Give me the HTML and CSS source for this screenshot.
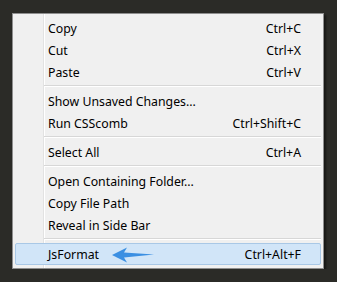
FILE: index.html
```html
<!DOCTYPE html>
<html lang="en">
<head>
  <meta charset="UTF-8" />
  <title>Context Menu</title>
  <link rel="stylesheet" href="styles.css">
</head>
<body>
  <div class="menu">
    <div class="item"><span class="label">Copy</span><span class="key">Ctrl+C</span></div>
    <div class="item"><span class="label">Cut</span><span class="key">Ctrl+X</span></div>
    <div class="item"><span class="label">Paste</span><span class="key">Ctrl+V</span></div>
    <div class="sep"></div>
    <div class="item"><span class="label">Show Unsaved Changes...</span></div>
    <div class="item"><span class="label">Run CSScomb</span><span class="key">Ctrl+Shift+C</span></div>
    <div class="sep"></div>
    <div class="item"><span class="label">Select All</span><span class="key">Ctrl+A</span></div>
    <div class="sep"></div>
    <div class="item"><span class="label">Open Containing Folder...</span></div>
    <div class="item"><span class="label">Copy File Path</span></div>
    <div class="item"><span class="label">Reveal in Side Bar</span></div>
    <div class="sep"></div>
    <div class="item active">
      <span class="label">JsFormat
        <svg class="arrow" width="42" height="16" viewBox="0 0 42 16">
          <path d="M0 8 L15 0.5 L12 5.5 L42 7.5 L12 10.5 L15 15.5 Z" fill="#3b8fe2"/>
        </svg>
      </span>
      <span class="key">Ctrl+Alt+F</span>
    </div>
  </div>
</body>
</html>
```

FILE: styles.css
```css
* {
  margin: 0;
  padding: 0;
  box-sizing: border-box;
}

body {
  background: #2b2b27;
  font-family: 'Noto Sans', 'Liberation Sans', sans-serif;
  font-size: 12.3px;
  color: #000;
  padding: 13px 0 0 12px;
}

.menu {
  width: 312px;
  border: 1px solid #8e8e8e;
  padding: 3px 2px;
  background: linear-gradient(to right, #f0f0f0 30px, #e2e2e2 30px, #e2e2e2 31px, #fff 31px, #fff 32px, #f0f0f0 32px);
  box-shadow: 2px 2px 2px rgba(0,0,0,0.5);
}

.item {
  display: flex;
  justify-content: space-between;
  align-items: center;
  height: 22px;
  padding: 0 19px 0 32px;
  border: 1px solid transparent;
  border-radius: 2px;
}

.item.active {
  background: #d1e5f8;
  border-color: #a9c8e6;
}

.label {
  display: flex;
  align-items: center;
}

.arrow {
  margin: 2px 0 0 13px;
}

.sep {
  height: 2px;
  margin: 2px 0 3px 29px;
  border-top: 1px solid #d7d7d7;
  border-bottom: 1px solid #fff;
}
```
